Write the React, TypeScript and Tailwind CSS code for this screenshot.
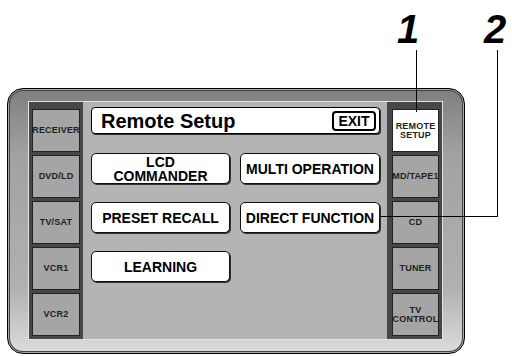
import React from "react";

function SideButton({ lines, active }: { lines: string[]; active?: boolean }) {
  return (
    <div
      className={`flex h-[43px] w-full flex-col items-center justify-center whitespace-nowrap border border-[#222] text-[9px] font-bold leading-[9px] tracking-[0.2px] text-[#1e1e1e] ${
        active ? "bg-white" : "bg-[#a5a5a5]"
      }`}
    >
      {lines.map((l) => (
        <span key={l}>{l}</span>
      ))}
    </div>
  );
}

function MenuButton({ lines }: { lines: string[] }) {
  return (
    <div className="flex h-[31px] flex-col items-center justify-center rounded-[5px] border border-[#111] bg-white text-[14px] font-bold leading-[14px] text-black shadow-[1px_1px_0_#333]">
      {lines.map((l) => (
        <span key={l} className="block leading-[14px]">{l}</span>
      ))}
    </div>
  );
}

export default function App() {
  const left = [["RECEIVER"], ["DVD/LD"], ["TV/SAT"], ["VCR1"], ["VCR2"]];
  const right = [["REMOTE", "SETUP"], ["MD/TAPE1"], ["CD"], ["TUNER"], ["TV", "CONTROL"]];
  return (
    <div className="relative h-[356px] w-[512px] overflow-hidden bg-white font-['Liberation_Sans',Arial,sans-serif]">
      <div className="ml-[7px] mt-[88px] flex h-[266px] w-[458px] rounded-[16px] border border-black bg-[linear-gradient(to_bottom,#7e7e7e_0%,#a2a2a2_25%,#b0b0b0_75%,#dcdcdc_100%)] pb-[13px] pl-[20px] pr-[21px] pt-[12px] shadow-[inset_0_0_0_1px_#aaa,inset_0_0_0_2px_#444]">
        <div className="flex flex-1 border border-[#e2e2e2]">
          <div className="flex w-[54px] flex-col gap-[3px] bg-[#474747] pl-[3px] pr-[3px] pt-[7px]">
            {left.map((l) => (
              <SideButton key={l[0]} lines={l} />
            ))}
          </div>
          <div className="flex w-[304px] flex-col bg-[#b4b4b4] pl-[8px] pt-[5px]">
            <div className="flex h-[27px] w-[289px] items-center justify-between rounded-[4px] border border-black bg-white pl-[9px] pr-[3px] shadow-[1px_1px_0_#333]">
              <span className="text-[20px] font-bold leading-none text-black">Remote Setup</span>
              <span className="flex h-[20px] w-[44px] items-center justify-center rounded-[4px] border-2 border-black text-[14px] font-bold leading-none text-black">
                EXIT
              </span>
            </div>
            <div className="mt-[19px] grid grid-cols-[139px_140px] gap-x-[10px] gap-y-[18px]">
              <MenuButton lines={["LCD", "COMMANDER"]} />
              <MenuButton lines={["MULTI OPERATION"]} />
              <MenuButton lines={["PRESET RECALL"]} />
              <MenuButton lines={["DIRECT FUNCTION"]} />
              <MenuButton lines={["LEARNING"]} />
            </div>
          </div>
          <div className="flex w-[55px] flex-col gap-[3px] bg-[#474747] pl-[5px] pr-[3px] pt-[7px]">
            {right.map((l, i) => (
              <SideButton key={l[0]} lines={l} active={i === 0} />
            ))}
          </div>
        </div>
      </div>

      {/* callouts */}
      <span className="absolute left-[397px] top-[9px] text-[40px] font-bold italic leading-[40px] text-black">1</span>
      <span className="absolute left-[484px] top-[9px] text-[40px] font-bold italic leading-[40px] text-black">2</span>
      <div className="absolute left-[416px] top-[50px] h-[62px] w-px bg-black" />
      <div className="absolute left-[497px] top-[50px] h-[167px] w-px bg-black" />
      <div className="absolute left-[381px] top-[216px] h-px w-[117px] bg-black" />
    </div>
  );
}
